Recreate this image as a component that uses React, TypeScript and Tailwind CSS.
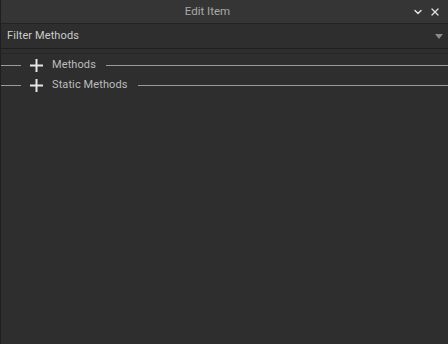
import { ChevronDown, X } from "lucide-react";

function Section({ label }: { label: string }) {
    return (
        <div className="flex h-5 items-center">
            <div className="h-px w-[20px] bg-[#9a9a9a]" />
            <svg className="ml-[9px]" width="13" height="13" viewBox="0 0 13 13">
                <rect x="5.5" y="0" width="2" height="13" fill="#e6e6e6" />
                <rect x="0" y="5.5" width="13" height="2" fill="#e6e6e6" />
            </svg>
            <span className="ml-[9px] text-[11px] tracking-[0.1px] text-[#bdbdbd]">{label}</span>
            <div className="ml-[10px] h-px flex-1 bg-[#9a9a9a]" />
        </div>
    );
}

export default function App() {
    return (
        <div
            className="flex h-[344px] w-[448px] flex-col overflow-hidden border-l border-[#1f1f1f] bg-[#2e2e2e]"
            style={{ fontFamily: "Roboto, 'Noto Sans', sans-serif" }}>
            <div className="relative flex h-6 shrink-0 items-center justify-center border-b border-[#222222] bg-[#353535] pr-[34px]">
                <span className="text-[11.5px] text-[#a9a9a9]">Edit Item</span>
                <div className="absolute right-[7px] top-0 flex h-full items-center gap-[5px] text-[#e0e0e0]">
                    <ChevronDown size={12} strokeWidth={3} />
                    <X size={12} strokeWidth={2.5} />
                </div>
            </div>
            <div className="flex h-[25px] shrink-0 items-center justify-between border-b border-[#1f1f1f] pl-[6px] pr-[5px]">
                <span className="text-[11px] tracking-[0.1px] text-[#cccccc]">Filter Methods</span>
                <svg width="8" height="5" viewBox="0 0 8 5">
                    <path d="M0 0h8L4 5z" fill="#8a8a8a" />
                </svg>
            </div>
            <div className="mt-1 flex flex-col border-t border-[#262626] pt-px">
                <Section label="Methods" />
                <Section label="Static Methods" />
            </div>
        </div>
    );
}
